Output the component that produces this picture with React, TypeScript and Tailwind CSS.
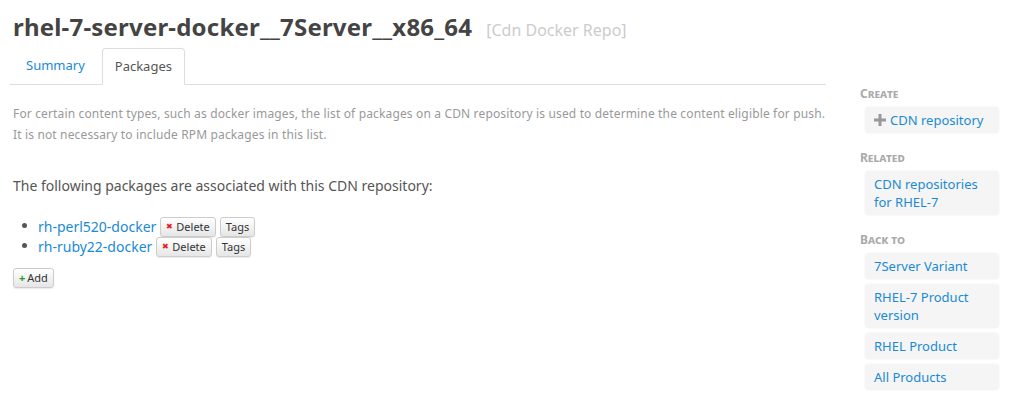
const deleteCross = <span className="text-[#e02020] text-[8px] mr-[3px] relative -top-px">✖</span>;

const packages = ["rh-perl520-docker", "rh-ruby22-docker"];

const sidebar = [
  { heading: "Create", links: [{ label: "CDN repository", plus: true }] },
  { heading: "Related", links: [{ label: "CDN repositories for RHEL-7" }] },
  {
    heading: "Back to",
    links: [
      { label: "7Server Variant" },
      { label: "RHEL-7 Product version" },
      { label: "RHEL Product" },
      { label: "All Products" },
    ],
  },
];

function SmallButton({ children }: { children: React.ReactNode }) {
  return (
    <button className="inline-flex items-center h-[20px] px-[5px] text-[11px] leading-none text-[#333] bg-gradient-to-b from-white to-[#e6e6e6] border border-[#ccc] rounded-[3px] shadow-[0_1px_1px_rgba(0,0,0,0.08)]">
      {children}
    </button>
  );
}

export default function App() {
  return (
    <div className="w-[1021px] h-[418px] bg-white font-['Noto_Sans',sans-serif] text-[#555] flex">
      <div className="w-[816px] ml-[10px] shrink-0">
        <h1 className="mt-[9px] ml-[3px] flex items-baseline">
          <span className="text-[24px] font-bold text-[#444] tracking-[0.2px]">rhel-7-server-docker__7Server__x86_64</span>
          <span className="ml-[14px] text-[16px] text-[#ccc]">[Cdn Docker Repo]</span>
        </h1>

        <div className="mt-[3px] flex border-b border-[#ddd] h-[37px]">
          <div className="px-[16px] flex items-center text-[13px] text-[#1a8ad4]">Summary</div>
          <div className="ml-px -mb-px px-[12px] flex items-center text-[13px] text-[#555] bg-white border border-[#ddd] border-b-white rounded-t-[4px]">
            Packages
          </div>
        </div>

        <p className="mt-[18px] ml-[3px] text-[12px] leading-[21px] text-[#999] tracking-[0.15px]">
          For certain content types, such as docker images, the list of packages on a CDN repository is used to determine the content eligible for push.
          <br />
          It is not necessary to include RPM packages in this list.
        </p>

        <p className="mt-[30px] ml-[3px] text-[14px] text-[#555]">The following packages are associated with this CDN repository:</p>

        <ul className="mt-[19px] ml-[28px] list-disc text-[13px]">
          {packages.map((p) => (
            <li key={p} className="h-[20px] leading-[20px]">
              <span className="inline-flex items-center gap-[4px] align-middle">
                <a className="text-[#1a8ad4] text-[14px]">{p}</a>
                <SmallButton>
                  {deleteCross}
                  Delete
                </SmallButton>
                <SmallButton>Tags</SmallButton>
              </span>
            </li>
          ))}
        </ul>

        <div className="mt-[9px] ml-[3px]">
          <SmallButton>
            <span className="text-[#2a9a2a] font-bold mr-[2px]">+</span>Add
          </SmallButton>
        </div>
      </div>

      <aside className="ml-[34px] mt-[86px] w-[139px]">
        {sidebar.map((s) => (
          <div key={s.heading} className="mb-[17px]">
            <div className="text-[12px] font-bold text-[#aaa] [font-variant:small-caps] leading-[16px] mb-[5px]">{s.heading}</div>
            <div className="flex flex-col gap-[5px] ml-[5px]">
              {s.links.map((l) => (
                <a
                  key={l.label}
                  className="flex items-start bg-[#f5f5f5] rounded-[4px] px-[9px] py-[4px] text-[13px] leading-[18px] text-[#1a8ad4] shadow-[0_0_2px_rgba(0,0,0,0.08)]"
                >
                  {l.plus && (
                    <svg viewBox="0 0 12 12" className="w-[12px] h-[12px] mt-[3px] mr-[4px] shrink-0">
                      <path d="M4.5 0h3v4.5H12v3H7.5V12h-3V7.5H0v-3h4.5z" fill="#999" />
                    </svg>
                  )}
                  <span>{l.label}</span>
                </a>
              ))}
            </div>
          </div>
        ))}
      </aside>
    </div>
  );
}
